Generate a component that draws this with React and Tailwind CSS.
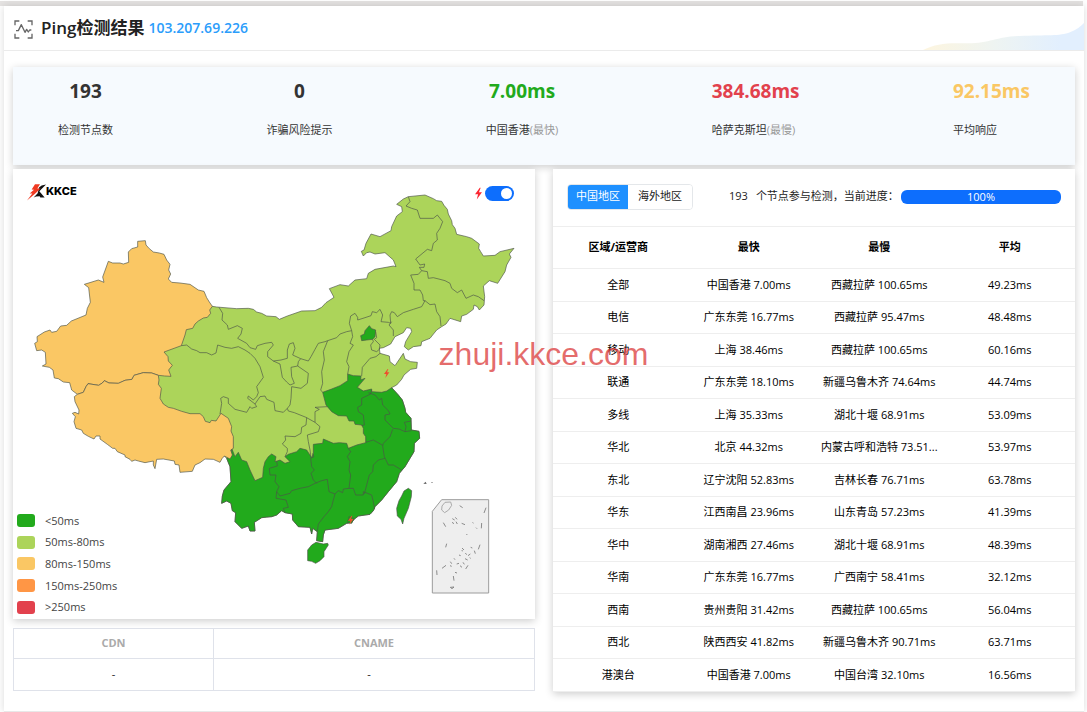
import React, { useState } from 'react';

const stats = [
  { value: '193', label: '检测节点数', color: 'text-[#333333]' },
  { value: '0', label: '诈骗风险提示', color: 'text-[#333333]' },
  { value: '7.00ms', label: '中国香港', note: '(最快)', color: 'text-[#22aa1c]' },
  { value: '384.68ms', label: '哈萨克斯坦', note: '(最慢)', color: 'text-[#e2414d]' },
  { value: '92.15ms', label: '平均响应', color: 'text-[#fac764]' },
];

const legend = [
  { label: '<50ms', color: 'bg-[#22aa1c]' },
  { label: '50ms-80ms', color: 'bg-[#acd45a]' },
  { label: '80ms-150ms', color: 'bg-[#fac764]' },
  { label: '150ms-250ms', color: 'bg-[#ff9645]' },
  { label: '>250ms', color: 'bg-[#e2414d]' },
];

const rows = [
  ['全部', '中国香港 7.00ms', '西藏拉萨 100.65ms', '49.23ms'],
  ['电信', '广东东莞 16.77ms', '西藏拉萨 95.47ms', '48.48ms'],
  ['移动', '上海 38.46ms', '西藏拉萨 100.65ms', '60.16ms'],
  ['联通', '广东东莞 18.10ms', '新疆乌鲁木齐 74.64ms', '44.74ms'],
  ['多线', '上海 35.33ms', '湖北十堰 68.91ms', '53.09ms'],
  ['华北', '北京 44.32ms', '内蒙古呼和浩特 73.51...', '53.97ms'],
  ['东北', '辽宁沈阳 52.83ms', '吉林长春 76.71ms', '63.78ms'],
  ['华东', '江西南昌 23.96ms', '山东青岛 57.23ms', '41.39ms'],
  ['华中', '湖南湘西 27.46ms', '湖北十堰 68.91ms', '48.39ms'],
  ['华南', '广东东莞 16.77ms', '广西南宁 58.41ms', '32.12ms'],
  ['西南', '贵州贵阳 31.42ms', '西藏拉萨 100.65ms', '56.04ms'],
  ['西北', '陕西西安 41.82ms', '新疆乌鲁木齐 90.71ms', '63.71ms'],
  ['港澳台', '中国香港 7.00ms', '中国台湾 32.10ms', '16.56ms'],
];

const mainland =
  'M37 49L50 51L110 56L145 55L160 58L170 66L185 70L200 78L228 80L238 88L262 78L305 63L345 62L365 52L378 38L402 22L388 -4L420 -16L445 -12L465 -30L500 -34L505 -50L525 -62L580 -72L588 -70L580 -90L555 -112L525 -108L510 -114L500 -112L490 -102L484 -116L492 -120L498 -140L513 -168L540 -160L573 -178L575 -190L590 -222L607 -235L605 -250L590 -257L610 -273L625 -280L675 -285L700 -274L710 -268L725 -266L732 -254L742 -242L745 -228L755 -208L757 -196L765 -185L770 -167L800 -160L815 -155L838 -138L836 -125L842 -115L850 -102L885 -104L900 -115L942 -125L928 -108L933 -98L920 -75L915 -55L893 -20L868 -28L850 -12L854 20L852 45L838 60L832 50L822 45L820 58L800 73L785 78L782 95L750 85L738 102L725 110L710 120L690 145L665 155L663 167L640 170L625 180L613 170L617 155L635 125L632 115L620 113L610 128L585 140L572 162L550 173L538 175L540 190L568 198L570 215L585 227L610 190L615 207L632 215L652 217L650 235L632 238L612 255L605 268L590 285L575 293L595 315L607 330L615 355L617 367L633 385L634 420L657 424L659 445L643 460L642 485L630 505L615 530L598 550L590 575L565 605L545 630L525 650L520 662L510 673L475 678L462 688L455 698L440 700L415 715L375 720L370 735L368 755L350 752L352 725L338 715L335 732L330 712L295 710L278 690L277 672L255 668L245 662L230 675L215 680L185 683L163 697L165 723L150 723L145 708L125 715L105 695L107 668L97 662L93 640L80 633L65 640L67 618L72 600L93 575L90 530L80 505L0 425L-130 350L-130 186L-70 150L0 60Z';

const xinjiang =
  'M353 34L376 32L378 45L388 56L400 66L418 69L432 73L440 90L450 103L446 120L452 132L445 147L455 157L480 159L510 163L535 180L552 184L560 203L568 216L577 229L569 240L572 250L562 262L550 264L535 273L525 282L518 295L499 299L495 315L484 347L432 366L444 380L445 393L457 406L446 420L453 439L434 438L415 436L395 429L370 428L342 436L336 448L315 451L295 460L267 459L253 452L247 459L236 466L204 461L198 470L190 487L172 493L155 480L149 458L130 456L115 446L103 444L99 420L88 412L67 408L78 402L76 367L65 360L50 362L44 340L52 335L51 320L73 306L90 300L95 307L110 304L122 288L140 286L154 273L198 255L202 235L211 217L206 173L193 163L235 150L252 157L248 141L265 94L278 99L300 99L310 102L326 97L325 66L335 56L353 51Z';

const tibet =
  'M172 493L190 487L198 470L204 461L236 466L247 459L253 452L267 459L295 460L315 451L336 448L342 436L370 428L395 429L415 436L417 450L415 463L424 475L420 505L430 522L445 532L460 535L485 544L510 551L540 551L550 560L556 574L570 578L574 571L588 573L603 550L625 565L635 590L633 603L640 620L640 655L632 660L637 675L630 687L613 678L606 686L600 697L580 688L555 687L540 698L525 705L517 724L480 727L477 705L465 703L463 693L430 687L410 688L405 716L400 705L400 693L375 698L355 693L345 690L335 694L330 688L315 680L315 675L292 665L285 655L278 655L262 643L240 627L240 618L228 618L222 627L205 619L190 610L185 600L168 595L162 575L166 560L157 550L165 547L176 552L177 540L165 515L163 500Z';

const southEast =
  'M368 307L395 297L420 287L443 272L443 252L460 257L483 258L482 270L495 265L472 292L490 303L515 297L515 305L545 307L560 303L575 293L595 315L607 330L615 355L617 367L633 385L634 420L657 424L659 445L643 460L642 485L630 505L615 530L598 550L590 575L565 605L545 630L525 650L520 662L510 673L475 678L462 688L455 698L440 700L415 715L375 720L370 735L368 755L350 752L352 725L338 715L335 732L330 712L295 710L278 690L277 672L255 668L245 662L230 675L215 680L200 681L185 683L163 697L165 723L150 723L145 708L125 715L105 695L107 668L97 662L93 640L80 633L65 640L67 618L72 600L93 575L90 530L80 505L92 498L95 475L105 500L115 487L125 510L140 515L150 540L165 572L188 562L190 535L195 515L205 500L215 492L228 500L225 515L240 510L255 520L270 515L255 500L265 493L290 485L300 475L320 480L335 503L340 490L340 463L368 460L370 447L400 460L418 458L440 460L445 475L470 465L497 458L497 440L490 430L490 415L485 405L465 403L462 393L447 393L440 378L415 377L395 365L378 345Z';

const lightBorders = [
  // Gansu, Qinghai, Ningxia, Shaanxi
  'M57 52L68 70L66 90L82 105L85 118L112 107L127 115L123 132L113 145L140 160L150 173L167 178L172 167L195 160L215 157L220 165L203 185L203 200L220 213L243 210L262 205L262 180L268 162L280 158L285 175L278 195L302 206L325 213L333 200L345 178L355 160L375 155L383 152L410 143L420 132L440 125L455 122',
  'M-56 167L-40 165L-25 177L-10 182L0 188L20 188L35 195L48 189L53 165L75 172L95 175L115 170L135 180L150 190L165 205L180 230L190 262L170 290L175 308L170 320L160 330L145 318L143 325L165 342L170 350L155 355L150 350L140 367L105 358L85 340L85 325L70 320L62 325L65 340L60 372',
  'M165 342L180 320L195 318L200 328L222 337L225 362L250 367L262 355L265 363L283 368L318 382L345 397',
  'M220 213L240 222L247 262L260 276L270 285L283 280L275 260L273 232L293 228L295 215L302 206',
  'M293 228L325 250L322 280L303 295L275 290L273 325L270 345L262 355',
  'M383 152L370 185L373 210L365 245L368 280L362 300L368 307',
  'M382 350L345 352L358 358L345 365L345 397L360 410L355 425L322 435L325 455L330 480L333 503',
  'M320 383L318 405L305 412L303 430L285 440L255 438L257 450L247 462L262 475L262 485L255 500',
  // Hebei, Shanxi, Shandong
  'M455 122L458 140L450 160L460 165L447 185L440 215L447 230L443 252',
  'M455 122L448 100L452 78L465 70L473 82L473 90L495 83L513 77L517 65L530 68L540 58L548 75L543 95L565 97L572 100L570 75L575 65L583 68L592 80L610 68L640 58L665 50L675 32',
  'M575 95L567 105L580 120L580 138',
  'M527 125L530 143L523 148L540 165L538 178L530 185L515 180L512 165L520 155L518 148',
  'M540 190L528 200L510 205L487 232L485 258',
  // north-east
  'M675 32L690 44L705 42L710 65L720 80L723 108',
  'M675 32L670 32L668 15L660 0L642 0L642 -20L632 -45L655 -47L665 -58L658 -68L672 -68L674 -78L660 -75L647 -93L682 -122L695 -118L700 -140L712 -150L710 -170L720 -185L728 -205L712 -225L700 -215L660 -215L652 -240L635 -245L618 -252L630 -265L625 -280',
  'M665 -58L682 -55L685 -35L700 -37L720 -32L735 -28L750 -20L755 -5L772 8L785 0L798 25L820 15L835 20L852 32',
];

const darkBorders = [
  'M515 300L512 312L485 325L485 345L473 352L475 365L490 375L493 405L485 407',
  'M505 308L525 315L538 330L545 325L548 345L565 362L570 372L555 375L555 390L580 415L597 417L615 425L634 422',
  'M633 393L613 397L618 410L615 425',
  'M578 418L570 440L550 460L548 468L553 500L565 525L580 525L605 540',
  'M497 457L520 450L543 463L548 466',
  'M555 505L535 510L520 525L518 545L508 555L500 585L493 612',
  'M445 475L452 485L442 500L450 515L447 540L452 555L447 595',
  'M447 595L430 597L428 608L415 602L405 612L387 605L382 568L365 572L345 580L325 590L300 595L275 602L270 610L240 618',
  'M447 595L460 595L467 615L490 615L490 605L515 615L520 635L524 658',
  'M337 490L342 500L332 505L335 530L343 540L333 550L340 570L350 580',
  'M230 513L232 528L208 535L210 555L228 555L225 575L237 590L230 605L228 625L258 630L265 652L250 655L255 668',
  'M240 618L230 605',
  'M405 612L400 630L395 650L385 665L372 680L355 702L352 725',
];

// Marks inside the South China Sea inset
const seaMarks =
  'M858 263L852 279M730 308L737 320M845 309L844 325M740 371L737 382M840 374L835 388M710 451L711 465M804 436L797 447M726 445L738 436M760 468L762 482M757 296L764 300M766 292L771 298M756 307L762 311M768 305L772 312M785 310L795 314M779 257L788 263M818 307L820 310M828 323L831 326M799 342L802 345M786 384L792 390M812 382L817 384M796 399L800 404M804 407L811 402M777 405L782 407M762 415L765 419M751 425L755 431M770 432L777 430M780 437L786 442M789 427L793 433M795 416L803 420M809 413L812 415M750 437L755 439M823 392L826 401M787 394L786 390M765 457L771 459M751 502L762 501L756 506Z';

const bolt = 'M3 -13L-8 2L-1 2L-4 14L8 -3L1 -3L5 -13Z';

function ChinaMap() {
  return (
    <svg viewBox="-561 -363 1566 1350" className="block h-auto w-full" role="img" aria-label="中国地区">
      <g stroke="#4b5348" strokeOpacity="0.65" strokeWidth="3" strokeLinejoin="round">
        <path d={mainland} fill="#acd45a" />
        <path d={southEast} fill="#22aa1c" />
        <g fill="#fac764" transform="translate(-540 -180)">
          <path d={xinjiang} />
          <path d={tibet} />
        </g>
        <g fill="none">
          {lightBorders.map(d => <path key={d} d={d} />)}
          {darkBorders.map(d => <path key={d} d={d} />)}
        </g>
        <g fill="#22aa1c">
          <path d="M508 107L515 116L527 120L525 140L518 148L500 150L485 152L482 137L493 132L495 122Z" />
          <path d="M383 760L385 765L372 785L372 800L360 812L347 820L335 814L323 812L323 780L335 765L348 757L370 762Z" />
          <path d="M625 595L635 602L634 620L625 655L612 685L608 702L603 688L592 678L590 655L597 632L605 618L612 603Z" />
          <path d="M447 680L462 685L455 700L443 697Z" />
        </g>
      </g>
      <path d="M670 581L677 575L680 582ZM694 576h4v2h-4z" fill="#666" />
      <g transform="translate(0 390)" strokeLinejoin="round">
        <path d="M725 239H866V519H697V274Z" fill="#eeeeee" stroke="#9c9c9c" strokeWidth="3" />
        <path d="M735 247L752 246L755 256L746 270L734 278L725 270L726 258Z" fill="none" stroke="#aaa" strokeWidth="3" />
        <path d={seaMarks} fill="none" stroke="#777" strokeWidth="2.5" />
      </g>
      <g fill="#f04b2d">
        <path d={bolt} transform="translate(560 250)" />
        <path d={bolt} transform="translate(452 690)" />
      </g>
    </svg>
  );
}

function Logo() {
  return (
    <div className="flex items-start">
      <svg viewBox="0 0 57 50" className="mt-px h-[17px] w-[19px]" aria-hidden="true">
        <path d="M36 10L44 4L57 1L37 21L53 40L40 40L38 36L27 37L20 40L32 27Z" fill="#111" />
        <path d="M24 0L39 0L31 13L41 13L24 29L0 49L16 28L8 28L21 17L14 16Z" fill="#f03a22" />
      </svg>
      <span className="font-['Inter','Liberation_Sans',sans-serif] text-[11px] leading-4 font-extrabold text-black">KKCE</span>
    </div>
  );
}

export default function App() {
  const [tab, setTab] = useState('china');
  const [flash, setFlash] = useState(true);

  return (
    <div className="relative bg-white pt-px font-['Open_Sans','Noto_Sans_CJK_SC',sans-serif] text-[11px] text-[#222222]">
      <div className="mr-1 h-[5px] bg-[#e5e3e2]"></div>

      <main className="mr-[3px] ml-1 border-b border-[#e8e8e8] bg-white pb-[19px] shadow-[0_0_8px_rgba(0,0,0,0.15)]">
        <header className="flex h-[45px] items-center justify-between border-b border-[#ebebeb]">
          <div className="flex items-center pl-[10px]">
            <svg viewBox="0 0 57 57" className="mt-[3px] h-[19px] w-[19px]" fill="none" stroke="#666" strokeWidth="4" aria-hidden="true">
              <path d="M3 16V3H16M41 3H54V16M54 41V54H41M16 54H3V41" />
              <path d="M6 32H13L22 14L33 37L38 28L43 36L47 30H52" strokeLinejoin="round" />
            </svg>
            <h1 className="ml-2 text-[17px] leading-6 font-semibold">Ping检测结果</h1>
            <span className="ml-1 text-sm leading-5 font-semibold text-[#2b9dfb]">103.207.69.226</span>
          </div>
          <svg viewBox="430 70 482 81" className="h-[27px] w-[161px] self-end" preserveAspectRatio="none" aria-hidden="true">
            <defs>
              <linearGradient id="wave" x1="0" x2="1">
                <stop offset="0" stopColor="#fdf5df" />
                <stop offset="0.45" stopColor="#eef4f2" />
                <stop offset="0.85" stopColor="#e2effe" />
              </linearGradient>
            </defs>
            <path d="M430 151C470 132 500 129 560 131C630 132 650 111 720 109C800 106 840 110 870 98C890 90 902 80 912 70V151Z" fill="url(#wave)" />
          </svg>
        </header>

        <section className="mx-[9px] mt-4 flex justify-between bg-[#f6fafe] px-[45px] pt-[10px] pb-[25px] shadow-[0_2px_8px_rgba(0,0,0,0.2)]">
          {stats.map(item => (
            <div key={item.label}>
              <div className={`text-center text-[19px] leading-7 font-bold ${item.color}`}>{item.value}</div>
              <div className="mt-[15px] leading-5 text-[#333333]">
                {item.label}
                {item.note && <span className="text-[#999999]">{item.note}</span>}
              </div>
            </div>
          ))}
        </section>

        <div className="mx-[9px] mt-1 grid grid-cols-2 items-start gap-[18px]">
          <div>
            <section className="relative bg-white shadow-[0_2px_8px_rgba(0,0,0,0.2)]">
              <ChinaMap />
              <div className="absolute top-[14px] left-[14px]">
                <Logo />
              </div>
              <label className="absolute top-[17px] right-[21px] flex items-center gap-[2px]">
                <svg viewBox="-9 -15 18 30" className="h-[13px] w-[9px]" aria-hidden="true">
                  <path d={bolt} fill="#fb2530" />
                </svg>
                <input
                  type="checkbox"
                  role="switch"
                  aria-label="闪电"
                  checked={flash}
                  onChange={e => setFlash(e.target.checked)}
                  className="flex h-[15px] w-[29px] appearance-none items-center rounded-full bg-[#bbbbbb] px-[2px] before:h-[11px] before:w-[11px] before:rounded-full before:bg-white before:content-[''] checked:justify-end checked:bg-[#0d6efd]"
                />
              </label>
              <ul className="absolute bottom-px left-1 flex h-[108px] flex-col text-[#444444]">
                {legend.map(item => (
                  <li key={item.label} className="flex flex-1 items-center gap-[10px]">
                    <span className={`h-[13px] w-[18px] rounded-[3px] ${item.color}`}></span>
                    <span className="leading-4">{item.label}</span>
                  </li>
                ))}
              </ul>
            </section>

            <table className="mt-[9px] w-full table-fixed border-collapse text-center">
              <thead>
                <tr className="h-[30px] text-[#aaaaaa]">
                  <th className="w-[200px] border border-[#dfe2ea] font-bold">CDN</th>
                  <th className="border border-[#dfe2ea] font-bold">CNAME</th>
                </tr>
              </thead>
              <tbody>
                <tr className="h-8">
                  <td className="border border-[#dfe2ea]">-</td>
                  <td className="border border-[#dfe2ea] pr-[10px]">-</td>
                </tr>
              </tbody>
            </table>
          </div>

          <section className="bg-white shadow-[0_2px_8px_rgba(0,0,0,0.2)]">
            <div className="flex h-[57px] items-center px-[14px] pb-[2px]">
              <div className="flex shrink-0 overflow-hidden rounded border border-[#e4e7ea]">
                <button
                  type="button"
                  onClick={() => setTab('china')}
                  className={`h-6 px-2 whitespace-nowrap ${tab === 'china' ? 'bg-[#1e90ff] text-white' : 'bg-white'}`}
                >
                  中国地区
                </button>
                <button
                  type="button"
                  onClick={() => setTab('overseas')}
                  className={`h-6 px-[10px] whitespace-nowrap ${tab === 'overseas' ? 'bg-[#1e90ff] text-white' : 'bg-white'}`}
                >
                  海外地区
                </button>
              </div>
              <span className="ml-9 shrink-0">193</span>
              <span id="progress-label" className="ml-2 shrink-0">个节点参与检测，当前进度：</span>
              <div
                role="progressbar"
                aria-labelledby="progress-label"
                aria-valuenow={100}
                className="ml-auto h-[14px] w-40 rounded-md bg-[#0d6efd] text-center leading-[13px] text-white"
              >
                100%
              </div>
            </div>

            <table className="w-full table-fixed border-collapse text-center text-black">
              <thead>
                <tr className="h-[42px] border-y border-[#eeeeee]">
                  <th className="font-bold">区域/运营商</th>
                  <th className="font-bold">最快</th>
                  <th className="font-bold">最慢</th>
                  <th className="font-bold">平均</th>
                </tr>
              </thead>
              <tbody>
                {rows.map(row => (
                  <tr key={row[0]} className="border-b border-[#eeeeee] odd:h-[33px] even:h-8">
                    {row.map((cell, i) => (
                      <td key={i} className="whitespace-nowrap">{cell}</td>
                    ))}
                  </tr>
                ))}
              </tbody>
            </table>
          </section>
        </div>
      </main>

      <div className="pointer-events-none absolute inset-0 flex items-center justify-center pb-1 font-['Liberation_Sans',Arial,sans-serif] text-[32px] leading-none text-[#dc3c3c]/75">
        zhuji.kkce.com
      </div>
    </div>
  );
}
